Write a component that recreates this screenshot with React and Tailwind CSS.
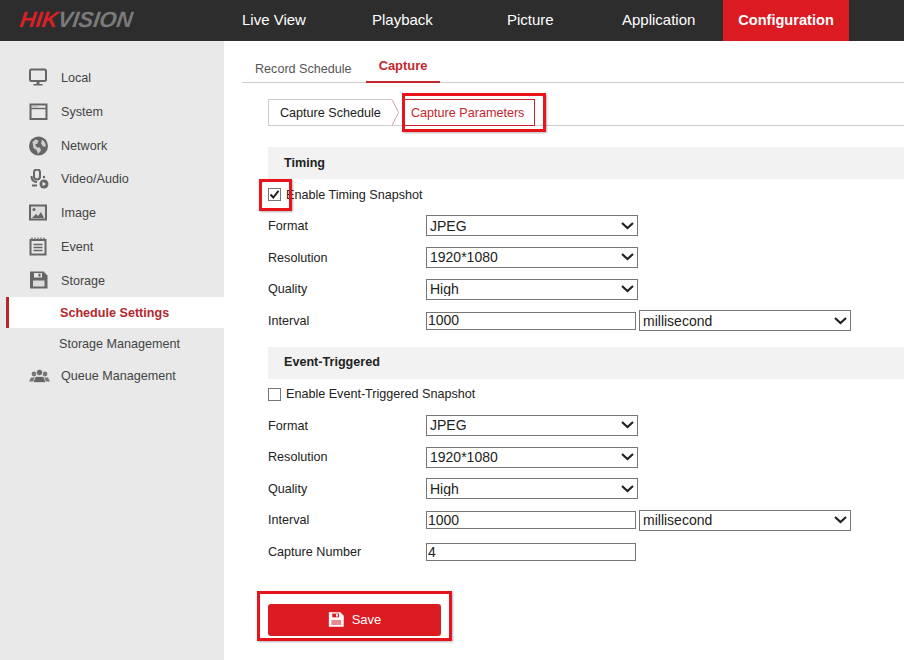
import React from "react";

const Icon = ({ children, size = 20 }) => (
  <svg width={size} height={size} viewBox="0 0 20 20" className="shrink-0">
    {children}
  </svg>
);

const LocalIcon = () => (
  <Icon>
    <rect x="1" y="1.5" width="16" height="11.5" rx="1.5" fill="none" stroke="#666" strokeWidth="2" />
    <path d="M7.5 14h3v2H7.5zM4.5 16h9v1.6h-9z" fill="#666" />
  </Icon>
);

const SystemIcon = () => (
  <Icon>
    <rect x="1.5" y="2.5" width="16" height="14.5" fill="none" stroke="#666" strokeWidth="2" />
    <path d="M1.5 6.5h16" stroke="#666" strokeWidth="1.5" />
    <path d="M3.5 4.6h1M5.5 4.6h1M7.5 4.6h1" stroke="#999" strokeWidth="1" />
  </Icon>
);

const NetworkIcon = () => (
  <Icon>
    <circle cx="9.5" cy="10" r="9.5" fill="#666" />
    <path d="M3.5 6l3-2.5 3 1-1 3-2.5 1 2 3 3 0 1 3-3 3.5-1.5-4-3-2zM13 3.5l3 3 1 4-3 0-2-3z" fill="#cfcfcf" />
  </Icon>
);

const VideoIcon = () => (
  <Icon>
    <rect x="5" y="0.5" width="6" height="10" rx="3" fill="none" stroke="#666" strokeWidth="2" />
    <path d="M2.5 7c0 4 2 6 5.5 6M3 16.5h5" fill="none" stroke="#666" strokeWidth="2" />
    <circle cx="15" cy="15" r="4.5" fill="#666" />
    <path d="M13.5 12.8l3.6 2.2-3.6 2.2z" fill="#e9e9e9" />
    <circle cx="15" cy="8" r="1.2" fill="#666" />
  </Icon>
);

const ImageIcon = () => (
  <Icon>
    <rect x="1" y="2.5" width="16" height="14" fill="#dcdcdc" stroke="#666" strokeWidth="2" />
    <path d="M3 15l4-4 2 2 3-4 3 6z" fill="#666" />
    <circle cx="5" cy="6.5" r="1.5" fill="#666" />
  </Icon>
);

const EventIcon = () => (
  <Icon>
    <rect x="1.5" y="3" width="15" height="14.5" fill="none" stroke="#666" strokeWidth="2" />
    <path d="M3 0.5v3.5M6 0.5v3.5M9 0.5v3.5M12 0.5v3.5M15 0.5v3.5" stroke="#666" strokeWidth="1.2" />
    <path d="M4.5 7.5h9M4.5 10.5h9M4.5 13.5h9" stroke="#666" strokeWidth="1.3" />
  </Icon>
);

const FloppyIcon = ({ size = 20, color = "#666", slot = "#e9e9e9", label = "#dcdcdc" }) => (
  <Icon size={size}>
    <path d="M1 1.5h13.5l4 4v13H1z" fill={color} />
    <rect x="5" y="3" width="8" height="4.5" fill={slot} />
    <rect x="9.5" y="3.6" width="2" height="3" fill={color} />
    <rect x="4" y="10.5" width="11.5" height="6" fill={label} />
  </Icon>
);

const QueueIcon = () => (
  <svg width="21" height="20" viewBox="0 0 21 20" className="shrink-0">
    <circle cx="5" cy="8" r="2.4" fill="#777" />
    <circle cx="16" cy="8" r="2.4" fill="#777" />
    <path d="M0 15.5l2-4h6l2 4zM11 15.5l2-4h6l2 4z" fill="#777" />
    <circle cx="10.5" cy="6.5" r="3.2" fill="#666" stroke="#e9e9e9" />
    <path d="M4 16.5l2.5-6h8l2.5 6z" fill="#666" stroke="#e9e9e9" strokeWidth="0.7" />
  </svg>
);

const Chevron = () => (
  <svg width="13" height="8" viewBox="0 0 13 8" className="pointer-events-none absolute right-[4px] top-1/2 -translate-y-1/2">
    <path d="M1 1l5.5 5L12 1" fill="none" stroke="#222" strokeWidth="2.2" />
  </svg>
);

function MenuItem({ icon, label }) {
  return (
    <div className="flex h-[33.7px] items-center pl-[29px]">
      <div className="w-[32px]">{icon}</div>
      <span className="pt-px text-[12.6px] text-[#444]">{label}</span>
    </div>
  );
}

function Select({ value, width = "w-[212px]", height = "h-[21px]" }) {
  return (
    <div className={"relative " + width + " " + height}>
      <select
        defaultValue={value}
        className={"block appearance-none border border-[#767676] bg-white pl-[3px] text-[14px] leading-none text-[#222] outline-none " + width + " " + height}
      >
        <option>{value}</option>
      </select>
      <Chevron />
    </div>
  );
}

function Row({ label, children }) {
  return (
    <div className="flex h-[31.67px] items-center">
      <label className="w-[158px] pt-px text-[12.6px] text-[#222]">{label}</label>
      {children}
    </div>
  );
}

function TextBox({ value, width = "w-[210px]" }) {
  return (
    <input
      defaultValue={value}
      className={"block h-[18px] border border-[#767676] bg-white pl-[1px] text-[14px] text-[#222] outline-none " + width}
    />
  );
}

function SectionHead({ children }) {
  return (
    <div className="flex h-[32px] items-center bg-[#f2f2f2] pl-[16px] text-[12.6px] font-bold text-[#222]">
      {children}
    </div>
  );
}

function CheckRow({ checked, label }) {
  return (
    <div className="flex h-[31px] items-center">
      <span className="relative mr-[5px] h-[13px] w-[13px]">
        <input
          type="checkbox"
          defaultChecked={checked}
          className="m-0 block h-[13px] w-[13px] appearance-none border border-[#767676] bg-white"
        />
        {checked && (
          <svg width="13" height="13" viewBox="0 0 13 13" className="pointer-events-none absolute left-0 top-0">
            <path d="M2.5 6.5l2.8 3L10.5 2.8" fill="none" stroke="#222" strokeWidth="2" />
          </svg>
        )}
      </span>
      <span className={(checked ? "pt-px " : "") + "text-[12.6px] text-[#222]"}>{label}</span>
    </div>
  );
}

function SnapshotFields({ children }) {
  return (
    <div>
      <Row label="Format"><Select value="JPEG" /></Row>
      <Row label="Resolution"><Select value="1920*1080" /></Row>
      <Row label="Quality"><Select value="High" /></Row>
      <Row label="Interval">
        <div className="flex items-center gap-[3px]">
          <TextBox value="1000" />
          <Select value="millisecond" />
        </div>
      </Row>
      {children}
    </div>
  );
}

export default function App() {
  return (
    <div className="relative h-[660px] w-[904px] overflow-hidden bg-white font-['Liberation_Sans',Arial,sans-serif]">
      <header className="flex h-[41px] bg-[#2d2d2d]">
        <div className="w-[242px] pl-[20px] pt-[7px] text-[22px] font-bold italic leading-[26px]">
          <span className="inline-block origin-center -skew-x-[8deg] text-[#d9202a]">HIK</span>
          <span className="inline-block origin-center -skew-x-[8deg] text-[#7a7a7a]">VISION</span>
        </div>
        <nav className="flex flex-1 text-[15px] text-white">
          <span className="flex w-[130px] items-center">Live View</span>
          <span className="flex w-[135px] items-center">Playback</span>
          <span className="flex w-[115px] items-center">Picture</span>
          <span className="flex w-[101px] items-center">Application</span>
          <span className="flex w-[126px] items-center justify-center bg-[#dc1a21] text-[14.6px] font-bold">Configuration</span>
        </nav>
      </header>

      <div className="flex h-[619px]">
        <aside className="w-[224px] shrink-0 bg-[#e9e9e9] pt-[20.5px]">
          <MenuItem icon={<LocalIcon />} label="Local" />
          <MenuItem icon={<SystemIcon />} label="System" />
          <MenuItem icon={<NetworkIcon />} label="Network" />
          <MenuItem icon={<VideoIcon />} label="Video/Audio" />
          <MenuItem icon={<ImageIcon />} label="Image" />
          <MenuItem icon={<EventIcon />} label="Event" />
          <MenuItem icon={<FloppyIcon />} label="Storage" />
          <div className="ml-[6px] flex h-[31px] items-center border-l-[3px] border-[#b3272d] bg-white pl-[51px] pt-px text-[12.6px] font-bold text-[#b3272d]">
            Schedule Settings
          </div>
          <div className="flex h-[31px] items-center pl-[59px] pt-px text-[12.6px] text-[#444]">Storage Management</div>
          <MenuItem icon={<QueueIcon />} label="Queue Management" />
        </aside>

        <main className="min-w-0 flex-1 pl-[18px]">
          <div className="flex h-[42px] items-end border-b border-[#ccc] text-[12.6px]">
            <span className="flex h-full w-[124px] items-center pl-[13px] pt-[15px] text-[#555]">Record Schedule</span>
            <span className="-mb-px flex h-[42px] w-[74px] items-center justify-center border-b-2 border-[#c4262e] pt-[10px] text-[12.9px] font-bold text-[#c4262e]">
              Capture
            </span>
          </div>

          <div className="ml-[26px] mt-[16px] flex h-[27px] border-b border-[#ccc]">
            <div className="flex h-[27px] w-[124px] items-center border border-r-0 border-[#ccc] pl-[11px] pt-px text-[12.6px] text-[#222]">
              Capture Schedule
            </div>
            <svg width="11" height="27" viewBox="0 0 11 27" className="shrink-0">
              <path d="M0 0.5l6.5 13L0 26.5" fill="none" stroke="#d8a0a0" />
            </svg>
            <div className="flex h-[27px] w-[132px] items-center border border-[#c4262e] pl-[7px] pt-px text-[12.6px] text-[#c4262e]">
              Capture Parameters
            </div>
          </div>

          <div className="ml-[26px] mt-[21px]">
            <SectionHead>Timing</SectionHead>
            <CheckRow checked label="Enable Timing Snapshot" />
            <SnapshotFields />
            <div className="h-[10px]" />
            <SectionHead>Event-Triggered</SectionHead>
            <CheckRow label="Enable Event-Triggered Snapshot" />
            <SnapshotFields>
              <Row label="Capture Number"><TextBox value="4" /></Row>
            </SnapshotFields>
            <button className="mt-[36px] flex h-[32px] w-[173px] items-center justify-center gap-[7px] rounded-[3px] bg-[#dc1a21] text-[13px] text-white">
              <FloppyIcon size={17} color="#fff" slot="#dc1a21" label="#e58a8d" />
              Save
            </button>
          </div>
        </main>
      </div>

      {/* red annotation boxes drawn over the screenshot */}
      <div className="pointer-events-none absolute left-[402px] top-[93px] h-[39px] w-[144px] border-[3px] border-[#e8141c] shadow-[1px_1px_2px_rgba(0,0,0,0.3)]" />
      <div className="pointer-events-none absolute left-[259px] top-[179px] h-[32px] w-[33px] border-[3px] border-[#e8141c] shadow-[1px_1px_2px_rgba(0,0,0,0.3)]" />
      <div className="pointer-events-none absolute left-[257px] top-[591px] h-[50px] w-[195px] border-[3px] border-[#e8141c] shadow-[1px_1px_2px_rgba(0,0,0,0.3)]" />
    </div>
  );
}
